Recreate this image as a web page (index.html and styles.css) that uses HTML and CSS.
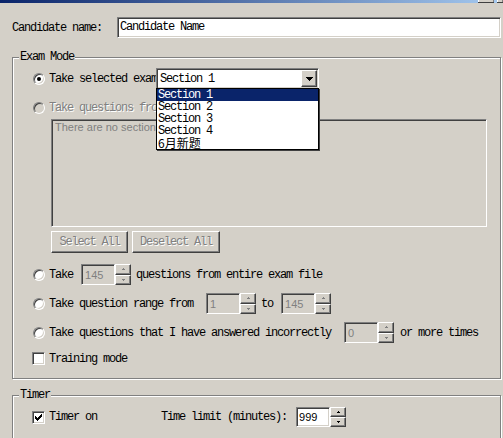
FILE: index.html
```html
<!DOCTYPE html>
<html>
<head>
<meta charset="utf-8">
<link rel="stylesheet" href="styles.css">
</head>
<body>
<div class="titlebar"><span class="tb-btn wide"></span><span class="tb-btn narrow"></span></div>
<main class="dialog">
  <div class="name-row">
    <span class="name-label">Candidate name:</span>
    <div class="textbox sunken">Candidate Name</div>
  </div>

  <fieldset class="group exam">
    <legend>Exam Mode</legend>
    <div class="group-body">
      <div class="row row-select">
        <span class="radio checked"></span>
        <span class="label clip">Take selected exam</span>
        <div class="combo sunken">
          <span class="combo-text">Section 1</span>
          <span class="combo-btn raised"><svg width="7" height="4" viewBox="0 0 7 4" shape-rendering="crispEdges"><path d="M0 0H7V1H6V2H5V3H4V4H3V3H2V2H1V1H0Z" fill="#000"/></svg></span>
          <ul class="dropdown">
            <li class="sel">Section 1</li>
            <li>Section 2</li>
            <li>Section 3</li>
            <li>Section 4</li>
            <li class="cjk">6月新题</li>
          </ul>
        </div>
      </div>

      <div class="row row-disabled">
        <span class="radio disabled"></span>
        <span class="label dis clip">Take questions from sections</span>
      </div>

      <div class="listbox sunken"><span class="listbox-text">There are no sections</span></div>

      <div class="btn-row">
        <button class="btn raised btn-select" disabled>Select All</button>
        <button class="btn raised btn-deselect" disabled>Deselect All</button>
      </div>

      <div class="row row-take">
        <span class="radio"></span>
        <span class="label">Take</span>
        <div class="spin sp-take">
          <span class="spin-field sunken dis-field">145</span>
          <span class="spin-btns">
            <span class="spin-btn raised"><svg width="3" height="2" viewBox="0 0 3 2" shape-rendering="crispEdges"><path d="M1 0H2V1H3V2H0V1H1Z" fill="#808080"/></svg></span>
            <span class="spin-btn raised"><svg width="3" height="2" viewBox="0 0 3 2" shape-rendering="crispEdges"><path d="M0 0H3V1H2V2H1V1H0Z" fill="#808080"/></svg></span>
          </span>
        </div>
        <span class="label after-spin">questions from entire exam file</span>
      </div>

      <div class="row row-range">
        <span class="radio"></span>
        <span class="label">Take question range from</span>
        <div class="spin sp-from">
          <span class="spin-field sunken dis-field">1</span>
          <span class="spin-btns">
            <span class="spin-btn raised"><svg width="3" height="2" viewBox="0 0 3 2" shape-rendering="crispEdges"><path d="M1 0H2V1H3V2H0V1H1Z" fill="#808080"/></svg></span>
            <span class="spin-btn raised"><svg width="3" height="2" viewBox="0 0 3 2" shape-rendering="crispEdges"><path d="M0 0H3V1H2V2H1V1H0Z" fill="#808080"/></svg></span>
          </span>
        </div>
        <span class="label to-label">to</span>
        <div class="spin sp-to">
          <span class="spin-field sunken dis-field">145</span>
          <span class="spin-btns">
            <span class="spin-btn raised"><svg width="3" height="2" viewBox="0 0 3 2" shape-rendering="crispEdges"><path d="M1 0H2V1H3V2H0V1H1Z" fill="#808080"/></svg></span>
            <span class="spin-btn raised"><svg width="3" height="2" viewBox="0 0 3 2" shape-rendering="crispEdges"><path d="M0 0H3V1H2V2H1V1H0Z" fill="#808080"/></svg></span>
          </span>
        </div>
      </div>

      <div class="row row-incorrect">
        <span class="radio"></span>
        <span class="label">Take questions that I have answered incorrectly</span>
        <div class="spin sp-times">
          <span class="spin-field sunken dis-field">0</span>
          <span class="spin-btns">
            <span class="spin-btn raised"><svg width="3" height="2" viewBox="0 0 3 2" shape-rendering="crispEdges"><path d="M1 0H2V1H3V2H0V1H1Z" fill="#808080"/></svg></span>
            <span class="spin-btn raised"><svg width="3" height="2" viewBox="0 0 3 2" shape-rendering="crispEdges"><path d="M0 0H3V1H2V2H1V1H0Z" fill="#808080"/></svg></span>
          </span>
        </div>
        <span class="label times-label">or more times</span>
      </div>

      <div class="row row-training">
        <span class="checkbox"></span>
        <span class="label">Training mode</span>
      </div>
    </div>
  </fieldset>

  <fieldset class="group timer">
    <legend>Timer</legend>
    <div class="group-body">
      <div class="row row-timer">
        <span class="checkbox"><svg width="7" height="7" viewBox="0 0 7 7" shape-rendering="crispEdges"><path d="M0 2H1V3H2V4H3V3H4V2H5V1H6V0H7V3H6V4H5V5H4V6H3V7H2V6H1V5H0Z" fill="#000"/></svg></span>
        <span class="label timer-on">Timer on</span>
        <span class="label">Time limit (minutes):</span>
        <div class="spin sp-limit">
          <span class="spin-field sunken">999</span>
          <span class="spin-btns">
            <span class="spin-btn raised"><svg width="3" height="2" viewBox="0 0 3 2" shape-rendering="crispEdges"><path d="M1 0H2V1H3V2H0V1H1Z" fill="#000"/></svg></span>
            <span class="spin-btn raised"><svg width="3" height="2" viewBox="0 0 3 2" shape-rendering="crispEdges"><path d="M0 0H3V1H2V2H1V1H0Z" fill="#000"/></svg></span>
          </span>
        </div>
      </div>
    </div>
  </fieldset>
</main>
</body>
</html>
```

FILE: styles.css
```css
* { box-sizing: border-box; }

html, body {
  margin: 0;
  padding: 0;
}

body {
  width: 503px;
  height: 438px;
  overflow: hidden;
  background: #d4d0c8;
  color: #000;
  font-family: "Liberation Mono", "DejaVu Sans Mono", monospace;
  font-size: 12px;
  letter-spacing: -1.2px;
}

/* window title bar remnant */
.titlebar {
  height: 3px;
  display: flex;
  justify-content: flex-end;
  background: linear-gradient(to right, #0a246a, #a6caf0);
}
.tb-btn {
  height: 3px;
  background: #d4d0c8;
  border-bottom: 1px solid #404040;
  box-shadow: inset 1px 0 #ffffff, inset -1px 0 #808080;
}
.tb-btn.wide { width: 16px; margin-right: 3px; }
.tb-btn.narrow { width: 6px; }

.dialog {
  padding: 0 2px 0 12px;
}

/* 3D borders */
.sunken {
  border: 1px solid;
  border-color: #808080 #ffffff #ffffff #808080;
  box-shadow: inset 1px 1px #404040, inset -1px -1px #d4d0c8;
  background: #ffffff;
}
.raised {
  border: 1px solid;
  border-color: #ffffff #404040 #404040 #ffffff;
  box-shadow: inset -1px -1px #808080, inset 1px 1px #d4d0c8;
  background: #d4d0c8;
}

/* candidate name */
.name-row {
  display: flex;
  align-items: center;
  height: 21px;
  margin-top: 14px;
}
.name-label {
  width: 105px;
  white-space: nowrap;
}
.textbox {
  width: 384px;
  height: 21px;
  line-height: 19px;
  padding-left: 2px;
  white-space: nowrap;
}

/* group boxes */
.group {
  width: 489px;
  min-width: 0;
  margin: 13px 0 0 0;
  padding: 4px 0 9px 6px;
  border: 1px solid #808080;
  box-shadow: inset 1px 1px #ffffff, 1px 1px #ffffff;
}
.group legend {
  padding: 0 1px;
  line-height: 13px;
  background: #d4d0c8;
}
.group.timer {
  margin-top: 10px;
  padding: 5px 0 11px 6px;
}
.group-body {
  padding-left: 14px;
}

.row {
  display: flex;
  align-items: center;
  height: 21px;
  white-space: nowrap;
}
.row-disabled { margin-top: 8px; }
.row-take { margin-top: 11px; }
.row-range { margin-top: 8px; }
.row-incorrect { margin-top: 8px; }
.row-training { margin-top: 5px; }
.row-timer { height: 20px; }

.label { white-space: nowrap; }
.label.clip {
  width: 107px;
  overflow: hidden;
  flex: none;
}
.label.dis {
  color: #808080;
  text-shadow: 1px 1px 0 #ffffff;
}
.after-spin { margin-left: 5px; }
.to-label { margin-left: 5px; }
.times-label { margin-left: 6px; }
.timer-on { width: 112px; }

/* radio */
.radio {
  position: relative;
  flex: none;
  width: 12px;
  height: 12px;
  margin-right: 4px;
  border-radius: 50%;
  border: 1px solid;
  border-color: #808080 #ffffff #ffffff #808080;
  box-shadow: inset 1px 1px #404040, inset -1px -1px #d4d0c8;
  background: #ffffff;
}
.radio.disabled { background: #d4d0c8; }
.radio.checked::after {
  content: "";
  position: absolute;
  left: 3px;
  top: 3px;
  width: 4px;
  height: 4px;
  border-radius: 50%;
  background: #000;
}

/* checkbox */
.checkbox {
  flex: none;
  width: 13px;
  height: 13px;
  margin-left: -1px;
  margin-right: 4px;
  border: 1px solid;
  border-color: #808080 #ffffff #ffffff #808080;
  box-shadow: inset 1px 1px #404040, inset -1px -1px #d4d0c8;
  background: #ffffff;
  display: flex;
  align-items: center;
  justify-content: center;
}
.checkbox svg { display: block; }

/* combo */
.combo {
  position: relative;
  flex: none;
  width: 163px;
  height: 21px;
  display: flex;
  align-items: center;
  padding: 0 1px 0 3px;
}
.combo-text { flex: 1; }
.combo-btn {
  width: 16px;
  height: 17px;
  display: flex;
  align-items: center;
  justify-content: center;
}
.combo-btn svg { display: block; margin-top: 1px; }

.dropdown {
  position: absolute;
  left: -1px;
  top: 19px;
  z-index: 10;
  width: 163px;
  margin: 0;
  padding: 0;
  list-style: none;
  background: #ffffff;
  border: 1px solid #000000;
  box-shadow: 1px 1px 0 #404040;
}
.dropdown li {
  height: 12px;
  line-height: 12px;
  padding-left: 1px;
  white-space: nowrap;
}
.dropdown li.sel {
  background: #0a246a;
  color: #ffffff;
}
.dropdown li.cjk {
  font-family: "Noto Sans CJK SC", "Liberation Mono", sans-serif;
  letter-spacing: 0;
}

/* list box */
.listbox {
  width: 436px;
  height: 108px;
  margin: 1px 0 0 18px;
  padding: 1px 0 0 3px;
  background: #d4d0c8;
  color: #808080;
  font-family: "Liberation Sans", Arial, sans-serif;
  font-size: 11px;
  letter-spacing: 0;
  white-space: nowrap;
}
.listbox-text {
  display: inline-block;
  max-width: 102px;
  overflow: hidden;
  vertical-align: top;
}

/* buttons */
.btn-row {
  display: flex;
  gap: 4px;
  margin: 4px 0 0 18px;
}
.btn {
  height: 22px;
  padding: 0;
  font: inherit;
  letter-spacing: inherit;
  color: #808080;
  text-shadow: 1px 1px 0 #ffffff;
}
.btn-select { width: 77px; }
.btn-deselect { width: 88px; }

/* spin boxes */
.spin {
  flex: none;
  display: flex;
  width: 50px;
  height: 21px;
}
.sp-take { margin-left: 8px; }
.sp-from { margin-left: 13px; }
.sp-to { margin-left: 8px; }
.sp-times { margin-left: 13px; }
.sp-limit { margin-left: 9px; height: 20px; }

.spin-field {
  width: 34px;
  height: 100%;
  padding-left: 3px;
  font-family: "Liberation Sans", Arial, sans-serif;
  font-size: 11px;
  letter-spacing: 0;
  display: flex;
  align-items: center;
}
.spin-field.dis-field {
  background: #d4d0c8;
  color: #808080;
}
.sp-limit .spin-field { padding-left: 2px; }
.spin-btns {
  width: 16px;
  display: flex;
  flex-direction: column;
}
.spin-btn {
  flex: 1;
  display: flex;
  align-items: center;
  justify-content: center;
}
.spin-btn svg { display: block; }
```
